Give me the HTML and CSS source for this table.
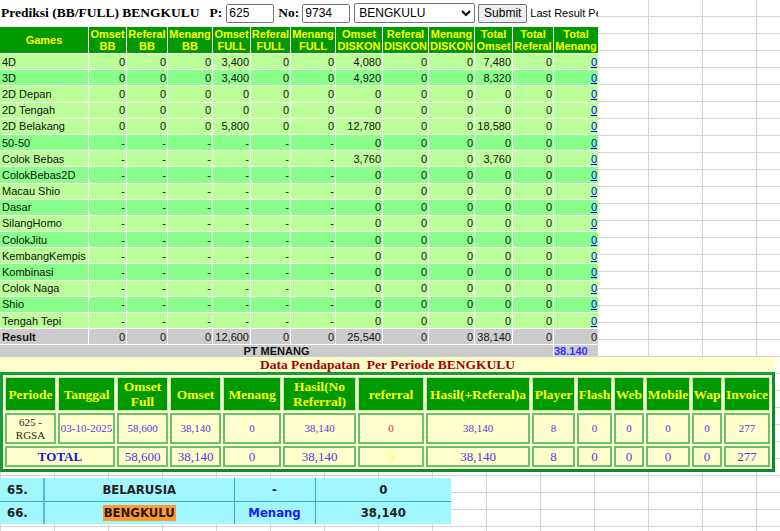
FILE: index.html
```html
<!DOCTYPE html>
<html lang="id">
<head>
<meta charset="utf-8">
<title>Prediksi BENGKULU</title>
<link rel="stylesheet" href="styles.css">
</head>
<body>
<div class="sheet">
  <div class="topbar">
    <span class="title">Prediksi (BB/FULL) BENGKULU</span>
    <span class="lbl lbl-p">P:</span>
    <input class="num" type="text" value="625">
    <span class="lbl lbl-no">No:</span>
    <input class="num num-no" type="text" value="9734">
    <select class="pasar"><option>BENGKULU</option></select>
    <button class="btn" type="button">Submit</button>
    <span class="last">Last Result Pe</span>
  </div>
  <table class="games">
    <colgroup>
      <col style="width:88px"><col style="width:37px"><col style="width:40px"><col style="width:44px">
      <col style="width:37px"><col style="width:39px"><col style="width:44px"><col style="width:46px">
      <col style="width:45px"><col style="width:45px"><col style="width:37px"><col style="width:40px">
      <col style="width:44px">
    </colgroup>
    <thead>
      <tr>
        <th>Games</th><th>Omset<br>BB</th><th>Referal<br>BB</th><th>Menang<br>BB</th>
        <th>Omset<br>FULL</th><th>Referal<br>FULL</th><th>Menang<br>FULL</th>
        <th>Omset<br>DISKON</th><th>Referal<br>DISKON</th><th>Menang<br>DISKON</th>
        <th>Total<br>Omset</th><th>Total<br>Referal</th><th>Total<br>Menang</th>
      </tr>
    </thead>
    <tbody>
      <tr class="l"><td class="g">4D</td><td>0</td><td>0</td><td>0</td><td>3,400</td><td>0</td><td>0</td><td>4,080</td><td>0</td><td>0</td><td>7,480</td><td>0</td><td><a href="#">0</a></td></tr>
      <tr class="d"><td class="g">3D</td><td>0</td><td>0</td><td>0</td><td>3,400</td><td>0</td><td>0</td><td>4,920</td><td>0</td><td>0</td><td>8,320</td><td>0</td><td><a href="#">0</a></td></tr>
      <tr class="l"><td class="g">2D Depan</td><td>0</td><td>0</td><td>0</td><td>0</td><td>0</td><td>0</td><td>0</td><td>0</td><td>0</td><td>0</td><td>0</td><td><a href="#">0</a></td></tr>
      <tr class="l"><td class="g">2D Tengah</td><td>0</td><td>0</td><td>0</td><td>0</td><td>0</td><td>0</td><td>0</td><td>0</td><td>0</td><td>0</td><td>0</td><td><a href="#">0</a></td></tr>
      <tr class="l"><td class="g">2D Belakang</td><td>0</td><td>0</td><td>0</td><td>5,800</td><td>0</td><td>0</td><td>12,780</td><td>0</td><td>0</td><td>18,580</td><td>0</td><td><a href="#">0</a></td></tr>
      <tr class="d"><td class="g">50-50</td><td>-</td><td>-</td><td>-</td><td>-</td><td>-</td><td>-</td><td>0</td><td>0</td><td>0</td><td>0</td><td>0</td><td><a href="#">0</a></td></tr>
      <tr class="l"><td class="g">Colok Bebas</td><td>-</td><td>-</td><td>-</td><td>-</td><td>-</td><td>-</td><td>3,760</td><td>0</td><td>0</td><td>3,760</td><td>0</td><td><a href="#">0</a></td></tr>
      <tr class="d"><td class="g">ColokBebas2D</td><td>-</td><td>-</td><td>-</td><td>-</td><td>-</td><td>-</td><td>0</td><td>0</td><td>0</td><td>0</td><td>0</td><td><a href="#">0</a></td></tr>
      <tr class="l"><td class="g">Macau Shio</td><td>-</td><td>-</td><td>-</td><td>-</td><td>-</td><td>-</td><td>0</td><td>0</td><td>0</td><td>0</td><td>0</td><td><a href="#">0</a></td></tr>
      <tr class="d"><td class="g">Dasar</td><td>-</td><td>-</td><td>-</td><td>-</td><td>-</td><td>-</td><td>0</td><td>0</td><td>0</td><td>0</td><td>0</td><td><a href="#">0</a></td></tr>
      <tr class="l"><td class="g">SilangHomo</td><td>-</td><td>-</td><td>-</td><td>-</td><td>-</td><td>-</td><td>0</td><td>0</td><td>0</td><td>0</td><td>0</td><td><a href="#">0</a></td></tr>
      <tr class="d"><td class="g">ColokJitu</td><td>-</td><td>-</td><td>-</td><td>-</td><td>-</td><td>-</td><td>0</td><td>0</td><td>0</td><td>0</td><td>0</td><td><a href="#">0</a></td></tr>
      <tr class="l"><td class="g">KembangKempis</td><td>-</td><td>-</td><td>-</td><td>-</td><td>-</td><td>-</td><td>0</td><td>0</td><td>0</td><td>0</td><td>0</td><td><a href="#">0</a></td></tr>
      <tr class="d"><td class="g">Kombinasi</td><td>-</td><td>-</td><td>-</td><td>-</td><td>-</td><td>-</td><td>0</td><td>0</td><td>0</td><td>0</td><td>0</td><td><a href="#">0</a></td></tr>
      <tr class="l"><td class="g">Colok Naga</td><td>-</td><td>-</td><td>-</td><td>-</td><td>-</td><td>-</td><td>0</td><td>0</td><td>0</td><td>0</td><td>0</td><td><a href="#">0</a></td></tr>
      <tr class="d"><td class="g">Shio</td><td>-</td><td>-</td><td>-</td><td>-</td><td>-</td><td>-</td><td>0</td><td>0</td><td>0</td><td>0</td><td>0</td><td><a href="#">0</a></td></tr>
      <tr class="l"><td class="g">Tengah Tepi</td><td>-</td><td>-</td><td>-</td><td>-</td><td>-</td><td>-</td><td>0</td><td>0</td><td>0</td><td>0</td><td>0</td><td><a href="#">0</a></td></tr>
      <tr class="r"><td class="g res">Result</td><td>0</td><td>0</td><td>0</td><td>12,600</td><td>0</td><td>0</td><td>25,540</td><td>0</td><td>0</td><td>38,140</td><td>0</td><td>0</td></tr>
      <tr class="pt"><td class="pt-label" colspan="12">PT MENANG</td><td class="pt-val">38.140</td></tr>
    </tbody>
  </table>
</div>

<div class="pendapatan">
  <div class="pend-title">Data Pendapatan&nbsp; Per Periode BENGKULU</div>
  <table class="pend">
    <colgroup>
      <col style="width:51px"><col style="width:57px"><col style="width:51px"><col style="width:51px">
      <col style="width:58px"><col style="width:73px"><col style="width:66px"><col style="width:104px">
      <col style="width:43px"><col style="width:35px"><col style="width:30px"><col style="width:44px">
      <col style="width:30px"><col style="width:46px">
    </colgroup>
    <tr class="head">
      <th>Periode</th><th>Tanggal</th><th>Omset<br>Full</th><th>Omset</th><th>Menang</th>
      <th>Hasil(No<br>Referral)</th><th>referral</th><th>Hasil(+Referal)a</th><th>Player</th>
      <th>Flash</th><th>Web</th><th>Mobile</th><th>Wap</th><th>Invoice</th>
    </tr>
    <tr class="row">
      <td class="per">625 -<br>RGSA</td><td>03-10-2025</td><td>58,600</td><td>38,140</td><td>0</td>
      <td>38,140</td><td class="ref">0</td><td>38,140</td><td>8</td><td>0</td><td>0</td><td>0</td><td>0</td><td>277</td>
    </tr>
    <tr class="tot">
      <td class="tot-label" colspan="2">TOTAL</td><td>58,600</td><td>38,140</td><td>0</td>
      <td>38,140</td><td class="ref">0</td><td>38,140</td><td>8</td><td>0</td><td>0</td><td>0</td><td>0</td><td>277</td>
    </tr>
  </table>
</div>

<table class="ranks">
  <colgroup>
    <col style="width:44px"><col style="width:190px"><col style="width:81px"><col style="width:136px">
  </colgroup>
  <tr class="rk1"><td class="no">65.</td><td>BELARUSIA</td><td>-</td><td>0</td></tr>
  <tr class="rk2"><td class="no">66.</td><td><span class="hl">BENGKULU</span></td><td class="win">Menang</td><td>38,140</td></tr>
</table>
</body>
</html>
```

FILE: styles.css
```css
html {
  background-color: #ffffff;
  background-image:
    linear-gradient(to right, #d4d4d4 1px, transparent 1px),
    linear-gradient(to bottom, #d4d4d4 1px, transparent 1px);
  background-size: 54px 100%, 100% 17px;
  background-position: 0 0, 0 16px;
  min-height: 100%;
}

body {
  margin: 0;
  font-family: "Liberation Sans", Arial, sans-serif;
}

/* ---------- top block ---------- */
.sheet {
  width: 598px;
  height: 357px;
  overflow: hidden;
  background: #ffffff;
}

.topbar {
  display: flex;
  align-items: center;
  height: 26px;
  white-space: nowrap;
}

.topbar > * { flex-shrink: 0; }

.title {
  margin-left: 1px;
  font: bold 13.5px "Liberation Serif", "Times New Roman", serif;
  color: #000;
}

.lbl {
  font: bold 13.5px "Liberation Serif", "Times New Roman", serif;
  color: #000;
}

.lbl-p { margin-left: 10px; }
.lbl-no { margin-left: 4px; }

.num {
  box-sizing: border-box;
  width: 48px;
  height: 19px;
  margin: 0 0 0 4px;
  padding: 1px 2px;
  border: 1px solid #767676;
  border-radius: 2px;
  font: 12px "Liberation Sans", Arial, sans-serif;
  color: #000;
  background: #fff;
}

.num-no { margin-left: 3px; }

.pasar {
  box-sizing: border-box;
  width: 121px;
  height: 20px;
  margin: 0 0 0 4px;
  font: 12px "Liberation Sans", Arial, sans-serif;
  color: #000;
  border: 1px solid #767676;
  border-radius: 2px;
  background-color: #fff;
}

.btn {
  box-sizing: border-box;
  width: 49px;
  height: 19px;
  margin: 0 0 0 3px;
  padding: 0;
  font: 12px "Liberation Sans", Arial, sans-serif;
  color: #000;
  background: #efefef;
  border: 1px solid #767676;
  border-radius: 2px;
}

.last {
  margin-left: 3px;
  font: 11px "Liberation Sans", Arial, sans-serif;
  color: #000;
}

/* ---------- games table ---------- */
.games {
  table-layout: fixed;
  width: 600px;
  margin-left: -1px;
  border-collapse: separate;
  border-spacing: 1px 1.5px;
  font: 11px "Liberation Sans", Arial, sans-serif;
  color: #111;
}

.games th {
  height: 26px;
  padding: 0;
  background: #009900;
  color: #ffff00;
  font-weight: bold;
  line-height: 12.5px;
  text-align: center;
  white-space: nowrap;
  overflow: hidden;
}

.games td {
  height: 15.2px;
  padding: 0 1px;
  line-height: 14px;
  text-align: right;
  white-space: nowrap;
  overflow: hidden;
}

.games td.g {
  text-align: left;
  padding-left: 2px;
}

.games td.res { font-weight: bold; }

.games tr.l td { background: #bbff99; }
.games tr.d td { background: #88ff88; }
.games tr.r td { background: #cccccc; }

.games a {
  color: #0000ee;
  text-decoration: underline;
}

.games tr.pt td {
  height: 12px;
  line-height: 12px;
  padding: 0;
  background: #cccccc;
  font-weight: bold;
  vertical-align: top;
}

.games td.pt-label {
  text-align: center;
  color: #111;
  background: linear-gradient(#8a8a8a, #8a8a8a) no-repeat 380px 9px / 50px 1px, #cccccc;
}

.games td.pt-val {
  text-align: left;
  padding-left: 2px;
  color: #3333ff;
}

/* ---------- pendapatan ---------- */
.pendapatan {
  width: 775px;
  background: #ffffcc;
}

.pend-title {
  height: 15px;
  line-height: 15px;
  text-align: center;
  font: bold 13.5px/15px "Liberation Serif", "Times New Roman", serif;
  color: #a50000;
}

.pend {
  table-layout: fixed;
  width: 775px;
  border-collapse: separate;
  border-spacing: 2px;
  border: 3px solid #169c3c;
  border-right-color: #0c8a2e;
  border-bottom-color: #0c8a2e;
  background: #ffffcc;
  font-family: "Liberation Serif", "Times New Roman", serif;
}

.pend th {
  height: 32px;
  padding: 0;
  background: #009900;
  color: #ffff00;
  border: 1px solid #b9e8b9;
  font: bold 13.5px/15px "Liberation Serif", "Times New Roman", serif;
  text-align: center;
  white-space: nowrap;
}

.pend td {
  padding: 0;
  border: 2px solid #6cbf6c;
  background: #ffffcc;
  color: #5b35e8;
  font-size: 11px;
  line-height: 13px;
  text-align: center;
  white-space: nowrap;
}

.pend tr.row td { height: 27px; }

.pend td.per { color: #222; }
.pend td.ref { color: #ff2a2a; }

.pend tr.tot td {
  height: 17px;
  font-size: 13px;
  line-height: 15px;
}

.pend tr.tot td.ref { color: #ffff66; }

.pend td.tot-label {
  font-weight: bold;
  color: #1a1acc;
}

/* ---------- ranks ---------- */
.ranks {
  table-layout: fixed;
  width: 451px;
  margin-top: 6px;
  border-collapse: collapse;
  background: #a2f6fd;
  font: bold 11.7px "DejaVu Sans", Verdana, sans-serif;
  color: #222;
}

.ranks td {
  padding: 0;
  text-align: center;
  white-space: nowrap;
}

.ranks td + td { border-left: 1px solid #3aa8c8; }

.ranks td.no {
  text-align: left;
  padding-left: 7px;
  border-right: 2px solid #5ab8d2;
}

.ranks tr.rk1 td { height: 23px; }
.ranks tr.rk2 td {
  height: 22px;
  border-top: 1px solid #3aa8c8;
}

.hl {
  background: #ff9933;
  color: #2a1800;
  padding: 1px 1px;
}

.ranks td.win { color: #1a1aff; }
```
